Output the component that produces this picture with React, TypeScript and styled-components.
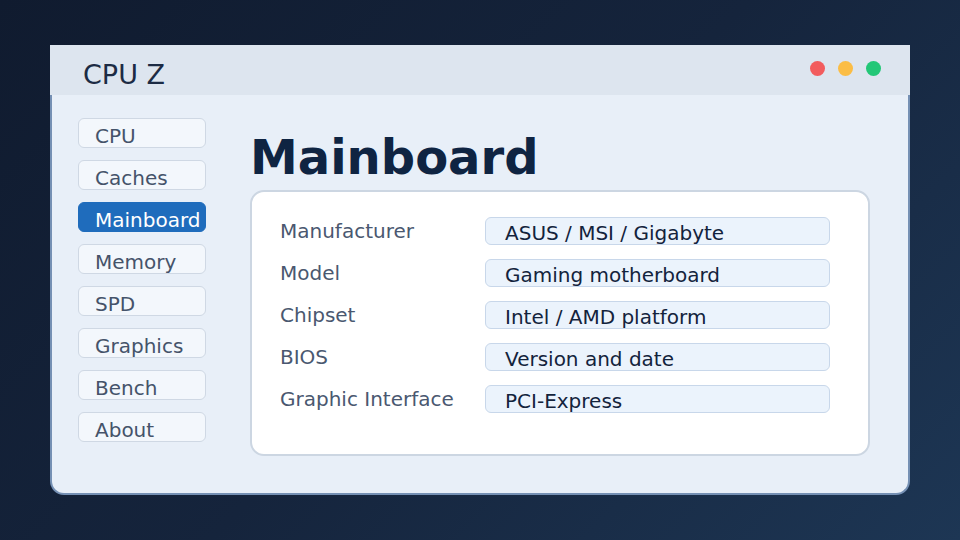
import styled, { createGlobalStyle } from 'styled-components';

const GlobalStyle = createGlobalStyle`
  html, body {
    margin: 0;
    padding: 0;
  }
  body {
    width: 960px;
    height: 540px;
    overflow: hidden;
    background: linear-gradient(135deg, #101b2f 0%, #15243c 50%, #1d3654 100%);
    font-family: "DejaVu Sans", "Liberation Sans", sans-serif;
  }
`;

const navItems = ['CPU', 'Caches', 'Mainboard', 'Memory', 'SPD', 'Graphics', 'Bench', 'About'];

const rows = [
  { label: 'Manufacturer', value: 'ASUS / MSI / Gigabyte' },
  { label: 'Model', value: 'Gaming motherboard' },
  { label: 'Chipset', value: 'Intel / AMD platform' },
  { label: 'BIOS', value: 'Version and date' },
  { label: 'Graphic Interface', value: 'PCI-Express' },
];

export default function App() {
  return (
    <>
      <GlobalStyle />
      <Stage>
        <Window>
          <TitleBar>
            <Title>CPU Z</Title>
            <Dots>
              <Dot color="#f25c5e" />
              <Dot color="#fbbd45" />
              <Dot color="#23c777" />
            </Dots>
          </TitleBar>
          <Body>
            <Sidebar>
              {navItems.map((item) => (
                <NavButton key={item} active={item === 'Mainboard'}>
                  {item}
                </NavButton>
              ))}
            </Sidebar>
            <Main>
              <Heading>Mainboard</Heading>
              <Card>
                {rows.map((row) => (
                  <Row key={row.label}>
                    <Label>{row.label}</Label>
                    <Value>{row.value}</Value>
                  </Row>
                ))}
              </Card>
            </Main>
          </Body>
        </Window>
      </Stage>
    </>
  );
}

const Stage = styled.div`
  padding: 45px 50px;
`;

const Window = styled.div`
  width: 860px;
  height: 450px;
  display: flex;
  flex-direction: column;
`;

const TitleBar = styled.div`
  height: 50px;
  flex-shrink: 0;
  background: #dde5ef;
  display: flex;
  align-items: center;
  justify-content: space-between;
  padding: 0 29px 0 33px;
`;

const Title = styled.div`
  font-size: 27px;
  color: #1c2b44;
  margin-top: 9px;
`;

const Dots = styled.div`
  display: flex;
  gap: 13px;
  margin-top: -3px;
`;

const Dot = styled.span<{ color: string }>`
  width: 15px;
  height: 15px;
  border-radius: 50%;
  background: ${(p) => p.color};
`;

const Body = styled.div`
  flex: 1;
  display: flex;
  background: #e8eff8;
  border: 2px solid #7590b4;
  border-top: none;
  border-radius: 0 0 14px 14px;
  padding: 23px 38px 0 26px;
`;

const Sidebar = styled.nav`
  width: 128px;
  display: flex;
  flex-direction: column;
  gap: 12px;
  flex-shrink: 0;
`;

const NavButton = styled.div<{ active?: boolean }>`
  height: 30px;
  box-sizing: border-box;
  border-radius: 6px;
  border: 1px solid ${(p) => (p.active ? '#1f6cbc' : '#cfd8e4')};
  background: ${(p) => (p.active ? '#1f6cbc' : '#f3f7fc')};
  color: ${(p) => (p.active ? '#ffffff' : '#45536a')};
  font-size: 20px;
  line-height: 30px;
  padding-left: 16px;
  padding-top: 2px;
  white-space: nowrap;
`;

const Main = styled.div`
  flex: 1;
  margin-left: 44px;
  display: flex;
  flex-direction: column;
`;

const Heading = styled.h1`
  margin: 10px 0 0 0;
  font-size: 48px;
  font-weight: bold;
  line-height: 58px;
  color: #0f2442;
`;

const Card = styled.div`
  margin-top: 4px;
  height: 266px;
  box-sizing: border-box;
  background: #ffffff;
  border: 2px solid #ccd6e2;
  border-radius: 14px;
  padding: 25px 38px 0 28px;
  display: flex;
  flex-direction: column;
  gap: 14px;
`;

const Row = styled.div`
  display: flex;
  align-items: center;
  height: 28px;
`;

const Label = styled.div`
  width: 205px;
  flex-shrink: 0;
  font-size: 20px;
  color: #4a5870;
  margin-top: -1px;
`;

const Value = styled.div`
  flex: 1;
  height: 28px;
  box-sizing: border-box;
  border: 1px solid #c8d7ea;
  background: #ebf3fc;
  border-radius: 6px;
  padding-left: 19px;
  font-size: 20px;
  line-height: 30px;
  color: #13233c;
  white-space: nowrap;
`;
